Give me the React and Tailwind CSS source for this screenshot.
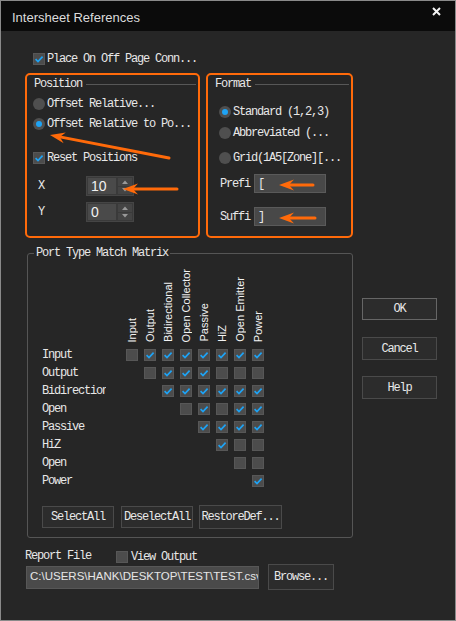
import React from "react";

const MONO = "font-['Liberation_Mono',monospace] text-[12px] tracking-[-1.2px] text-[#e8e8e8] leading-none whitespace-nowrap";

function Check({ checked }) {
  return (
    <div className="w-[12px] h-[12px] bg-[#4c4c4c] border border-[#575757] flex items-center justify-center shrink-0">
      {checked && (
        <svg width="10" height="10" viewBox="0 0 10 10">
          <path d="M1.6 5.2 L4 7.6 L8.6 2.6" fill="none" stroke="#1ea3f5" strokeWidth="1.7" />
        </svg>
      )}
    </div>
  );
}

function Radio({ checked }) {
  return (
    <div className="w-[12px] h-[12px] rounded-full bg-[#4f4f4f] flex items-center justify-center shrink-0">
      {checked && <div className="w-[6px] h-[6px] rounded-full bg-[#1ea3f5]" />}
    </div>
  );
}

function GroupHead({ label }) {
  return (
    <div className="h-[14px] mt-[2px] flex items-center gap-[4px]">
      <span className={MONO}>{label}</span>
      <div className="flex-1 h-px bg-[#575757]" />
    </div>
  );
}

function Spin({ value }) {
  return (
    <div className="w-[48px] h-[20px] bg-[#3a3a3a] border border-[#454545] flex items-center p-[1px] gap-[2px]">
      <div className="w-[28px] h-full bg-[#4a4a4a] flex items-center pl-[3px] font-['Liberation_Sans',sans-serif] text-[14px] text-[#f2f2f2] leading-none">
        {value}
      </div>
      <div className="flex-1 h-full flex flex-col gap-[1px]">
        <div className="flex-1 bg-[#444] flex items-center justify-center">
          <svg width="6" height="4" viewBox="0 0 6 4"><path d="M0 4 L3 0.5 L6 4Z" fill="#999" /></svg>
        </div>
        <div className="flex-1 bg-[#444] flex items-center justify-center">
          <svg width="6" height="4" viewBox="0 0 6 4"><path d="M0 0 L3 3.5 L6 0Z" fill="#999" /></svg>
        </div>
      </div>
    </div>
  );
}

function Btn({ children, className = "" }) {
  return (
    <div className={`bg-[#2c2c2c] border border-[#4a4a4a] flex items-center justify-center ${className}`}>
      <span className={MONO}>{children}</span>
    </div>
  );
}

function Arrow({ x1, y1, x2, y2 }) {
  const dx = x2 - x1, dy = y2 - y1;
  const len = Math.hypot(dx, dy);
  const ux = dx / len, uy = dy / len;
  const px = -uy, py = ux;
  const bx = x2 - ux * 15, by = y2 - uy * 15;
  const nx = x2 - ux * 10, ny = y2 - uy * 10;
  const pts = [
    [x2, y2],
    [bx + px * 5.5, by + py * 5.5],
    [nx, ny],
    [bx - px * 5.5, by - py * 5.5],
  ].map((p) => p.join(",")).join(" ");
  return (
    <g>
      <line x1={x1} y1={y1} x2={nx} y2={ny} stroke="#ff6a0a" strokeWidth="3" strokeLinecap="round" />
      <polygon points={pts} fill="#ff6a0a" />
    </g>
  );
}

const cols = ["Input", "Output", "Bidirectional", "Open Collector", "Passive", "HiZ", "Open Emitter", "Power"];
const rows = [
  ["Input", [0, 1, 1, 1, 1, 1, 1, 1]],
  ["Output", [null, 0, 1, 1, 1, 0, 0, 0]],
  ["Bidirection", [null, null, 1, 1, 1, 1, 1, 1]],
  ["Open", [null, null, null, 0, 1, 0, 1, 1]],
  ["Passive", [null, null, null, null, 1, 1, 1, 1]],
  ["HiZ", [null, null, null, null, null, 1, 0, 0]],
  ["Open", [null, null, null, null, null, null, 0, 0]],
  ["Power", [null, null, null, null, null, null, null, 1]],
];

export default function App() {
  return (
    <div className="relative w-[456px] h-[621px] border border-[#8a8a8a] bg-[#262626] overflow-hidden flex flex-col">
      {/* Title bar */}
      <div className="h-[30px] bg-[#0b0b0b] flex items-center justify-between pl-[11px] pr-[14px] shrink-0">
        <span className="font-['Liberation_Sans',sans-serif] text-[13px] text-[#dcdcdc] leading-none pt-[3px]">Intersheet References</span>
        <svg width="9" height="9" viewBox="0 0 9 9" className="-mt-[9px]">
          <path d="M1 1 L8 8 M8 1 L1 8" stroke="#f4f4f4" strokeWidth="2" />
        </svg>
      </div>

      {/* Place on off page */}
      <div className="mt-[22px] ml-[32px] h-[12px] flex items-center gap-[2px]">
        <Check checked />
        <span className={MONO}>Place On Off Page Conn...</span>
      </div>

      {/* Position + Format */}
      <div className="mt-[8px] ml-[24px] flex gap-[6px]">
        <div className="w-[175px] h-[165px] border-2 border-[#ff6a0a] rounded-[5px] pl-[6px] pr-[2px] flex flex-col">
          <div className="pl-[1px]"><GroupHead label="Position" /></div>
          <div className="mt-[7px] h-[12px] flex items-center gap-[2px]">
            <Radio />
            <span className={MONO}>Offset Relative...</span>
          </div>
          <div className="mt-[8px] h-[12px] flex items-center gap-[2px]">
            <Radio checked />
            <span className={MONO}>Offset Relative to Po...</span>
          </div>
          <div className="mt-[22px] h-[12px] flex items-center gap-[2px]">
            <Check checked />
            <span className={MONO}>Reset Positions</span>
          </div>
          <div className="mt-[12px] h-[20px] flex items-center">
            <span className={`${MONO} w-[53px] pl-[5px]`}>X</span>
            <Spin value="10" />
          </div>
          <div className="mt-[6px] h-[20px] flex items-center">
            <span className={`${MONO} w-[53px] pl-[5px]`}>Y</span>
            <Spin value="0" />
          </div>
        </div>

        <div className="w-[147px] h-[165px] border-2 border-[#ff6a0a] rounded-[5px] pl-[7px] pr-[2px] flex flex-col">
          <GroupHead label="Format" />
          <div className="mt-[15px] h-[12px] pl-[4px] flex items-center gap-[2px]">
            <Radio checked />
            <span className={MONO}>Standard (1,2,3)</span>
          </div>
          <div className="mt-[9px] h-[12px] pl-[4px] flex items-center gap-[2px]">
            <Radio />
            <span className={MONO}>Abbreviated (...</span>
          </div>
          <div className="mt-[13px] h-[12px] pl-[4px] flex items-center gap-[2px]">
            <Radio />
            <span className={MONO}>Grid(1A5[Zone][...</span>
          </div>
          <div className="mt-[10px] h-[19px] pl-[5px] flex items-center">
            <span className={`${MONO} w-[34px]`}>Prefi</span>
            <div className="w-[72px] h-full bg-[#484848] border border-[#5a5a5a] flex items-center pl-[3px]">
              <span className={MONO}>[</span>
            </div>
          </div>
          <div className="mt-[14px] h-[19px] pl-[5px] flex items-center">
            <span className={`${MONO} w-[34px]`}>Suffi</span>
            <div className="w-[72px] h-full bg-[#484848] border border-[#5a5a5a] flex items-center pl-[3px]">
              <span className={MONO}>]</span>
            </div>
          </div>
        </div>
      </div>

      {/* Matrix + side buttons */}
      <div className="mt-[15px] ml-[26px] flex">
        <div className="relative w-[326px] h-[285px] border border-[#555] rounded-[3px] pl-[14px] flex flex-col">
          <span className={`${MONO} absolute -top-[7px] left-[6px] bg-[#262626] px-[2px]`}>Port Type Match Matrix</span>
          {/* Header */}
          <div className="h-[88px] flex">
            <div className="w-[81px]" />
            {cols.map((c, i) => (
              <div key={i} className="w-[18px] h-full flex items-end justify-center">
                <span className="[writing-mode:vertical-rl] rotate-180 font-['Liberation_Sans',sans-serif] text-[11px] text-[#f2f2f2] leading-none whitespace-nowrap">
                  {c}
                </span>
              </div>
            ))}
          </div>
          {/* Rows */}
          <div className="mt-[4px] flex flex-col">
            {rows.map(([label, vals], r) => (
              <div key={r} className="h-[18px] flex items-center">
                <div className="w-[81px] overflow-hidden">
                  <div className={`${MONO} w-[64px] overflow-hidden`}>{label}</div>
                </div>
                {vals.map((v, i) => (
                  <div key={i} className="w-[18px] flex justify-center">
                    {v === null ? <div className="w-[12px] h-[12px]" /> : <Check checked={v === 1} />}
                  </div>
                ))}
              </div>
            ))}
          </div>
          {/* Buttons */}
          <div className="mt-[15px] h-[24px] flex items-center">
            <Btn className="w-[72px] h-[22px]">SelectAll</Btn>
            <Btn className="ml-[7px] w-[72px] h-[22px]">DeselectAll</Btn>
            <Btn className="ml-[6px] w-[83px] h-[24px]">RestoreDef...</Btn>
          </div>
        </div>

        <div className="ml-[9px] pt-[45px] flex flex-col">
          <Btn className="w-[75px] h-[22px] !border-[#666]">OK</Btn>
          <Btn className="mt-[17px] w-[75px] h-[23px]">Cancel</Btn>
          <Btn className="mt-[16px] w-[75px] h-[23px]">Help</Btn>
        </div>
      </div>

      {/* Report file */}
      <div className="mt-[12px] ml-[24px] h-[14px] flex items-center">
        <span className={`${MONO} w-[91px] -mt-[2px]`}>Report File</span>
        <Check />
        <span className={`${MONO} ml-[3px]`}>View Output</span>
      </div>
      <div className="mt-[0px] ml-[25px] h-[26px] flex items-center">
        <div className="w-[233px] h-[23px] bg-[#4a4a4a] border border-[#575757] flex items-center pl-[3px] overflow-hidden">
          <span className="font-['Liberation_Sans',sans-serif] text-[11.5px] text-[#e6e6e6] leading-none whitespace-nowrap">
            C:\USERS\HANK\DESKTOP\TEST\TEST.csv
          </span>
        </div>
        <Btn className="ml-[9px] w-[66px] h-[26px]">Browse...</Btn>
      </div>

      {/* Annotation arrows */}
      <svg className="absolute left-0 top-0 pointer-events-none" width="456" height="621" viewBox="-1 -1 456 621">
        <Arrow x1={167} y1={156} x2={48} y2={133} />
        <Arrow x1={175} y1={187} x2={121} y2={187} />
        <Arrow x1={311} y1={183} x2={277} y2={183} />
        <Arrow x1={313} y1={216} x2={277} y2={216} />
      </svg>
    </div>
  );
}
